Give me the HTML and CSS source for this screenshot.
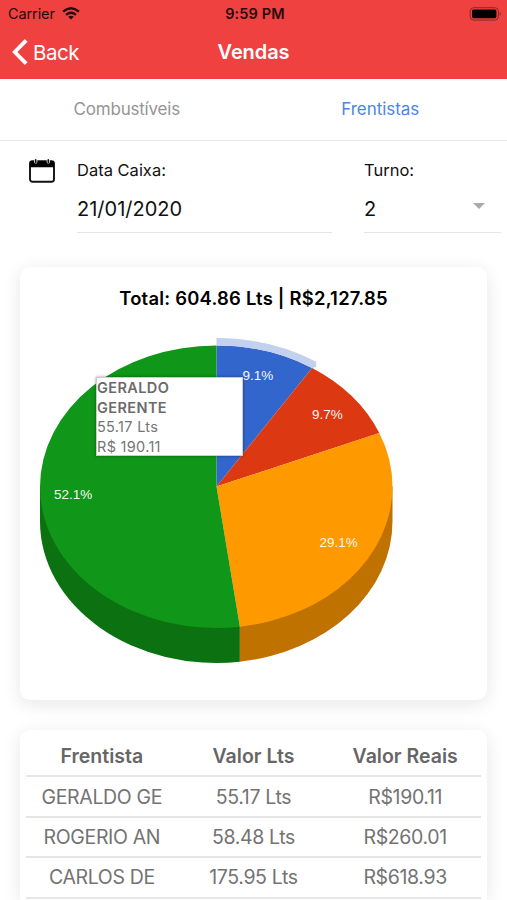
FILE: index.html
```html
<!DOCTYPE html>
<html lang="pt-BR">
<head>
<meta charset="utf-8">
<title>Vendas</title>
<link rel="stylesheet" href="styles.css">
</head>
<body>
<header class="header">
  <div class="status">
    <div class="carrier"><span>Carrier</span>
      <svg class="wifi" width="18" height="13" viewBox="0 0 18 13" fill="none" stroke="#260b0b" stroke-width="2.3"><path d="M1.1 4.6Q9-2.2 16.9 4.6M4 7.9q5-4.2 10 0"/><path d="M9 12.4 6.2 9.8q2.8-2.2 5.6 0z" fill="#260b0b" stroke="none"/></svg>
    </div>
    <span class="clock">9:59 PM</span>
    <svg class="battery" width="33" height="14" viewBox="0 0 33 14"><rect x="1.2" y=".7" width="28.2" height="12.4" rx="3.6" fill="none" stroke="#8d2525" stroke-width="1"/><rect x="3" y="2.4" width="24.4" height="8.8" rx="1.6" fill="#000"/><path d="M30.8 4.7q2 2.2 0 4.4z" fill="#8d2525"/></svg>
  </div>
  <nav class="nav">
    <a class="back"><svg width="16" height="26" viewBox="0 0 16 26" fill="none" stroke="#fff" stroke-width="3.8"><path d="M14.2 1.4 2.8 13l11.4 11.6"/></svg><span>Back</span></a>
    <h1 class="title">Vendas</h1>
    <span></span>
  </nav>
</header>
<div class="tabs"><a class="tab">Combustíveis</a><a class="tab active">Frentistas</a></div>
<main>
  <form class="filters">
    <svg class="calendar" width="26" height="24" viewBox="0 0 26 24"><rect x="1" y="2.3" width="24" height="20.4" rx="2.5" fill="#fff" stroke="#111" stroke-width="1.9"/><path d="M1 8.3V4.4q0-2.1 2.3-2.1h19.4Q25 2.3 25 4.4v3.9z" fill="#000"/><g fill="#fff"><rect x="5.1" y="0" width="3.2" height="4.5" rx="1.6"/><rect x="17.7" y="0" width="3.2" height="4.5" rx="1.6"/></g><path d="M6.7.9v2.5M19.3.9v2.5" stroke="#111" stroke-width="1.7" stroke-linecap="round"/></svg>
    <div class="field date"><label>Data Caixa:</label><div class="value">21/01/2020</div></div>
    <div class="field shift"><label>Turno:</label><div class="value"><span>2</span><i class="caret"></i></div></div>
  </form>
  <section class="card chart-card">
    <h2 class="total">Total: 604.86 Lts | R$2,127.85</h2>
    <div class="chart">
      <svg width="467" height="350" viewBox="20 330 467 350">
        <path d="M40 486.5v35A176.5 141.5 0 0 0 239.9 661.7v-35z" fill="#0c7211"/>
        <path d="M392.5 486.5v35A176.5 141.5 0 0 1 239.9 661.7v-35z" fill="#bf7200"/>
        <path d="M216.5 486.5V345.5A176.5 141.2 0 0 1 312.1 368z" fill="#36c"/>
        <path d="M216.5 486.5 312.1 368A176.5 141.2 0 0 1 379.3 433z" fill="#dc3912"/>
        <path d="M216.5 486.5 379.3 433A176 141.3 0 0 1 392.5 486.8 176.3 141.3 0 0 1 239.9 626.7z" fill="#f90"/>
        <path d="M216.5 486.5 239.9 626.7A176.5 141.2 0 0 1 40 486.7 176.5 141.2 0 0 1 216.5 345.5z" fill="#109618"/>
        <path d="M216.5 338A184 148.5 0 0 1 316.2 361.8V367L312.1 368A176.5 141 0 0 0 216.5 345.5z" fill="#c2d1f0"/>
        <g class="slice-label"><text x="242.5" y="380">9.1%</text><text x="312" y="419">9.7%</text><text x="319.5" y="547">29.1%</text><text x="54" y="499">52.1%</text></g>
      </svg>
      <div class="tooltip"><b>GERALDO GERENTE</b><span>55.17 Lts</span><span>R$ 190.11</span></div>
    </div>
  </section>
  <section class="card table-card">
    <table>
      <thead><tr><th>Frentista</th><th>Valor Lts</th><th>Valor Reais</th></tr></thead>
      <tbody>
        <tr><td>GERALDO GE</td><td>55.17 Lts</td><td>R$190.11</td></tr>
        <tr><td>ROGERIO AN</td><td>58.48 Lts</td><td>R$260.01</td></tr>
        <tr><td>CARLOS DE</td><td>175.95 Lts</td><td>R$618.93</td></tr>
      </tbody>
    </table>
  </section>
</main>
</body>
</html>
```
FILE: styles.css
```css
* { box-sizing: border-box; }
body { margin: 0; height: 900px; overflow: hidden; background: #fff; color: #111; font-family: Inter, "Liberation Sans", sans-serif; }
h1, h2 { margin: 0; }
.header { height: 79px; background: #f04141; display: flex; flex-direction: column; }
.status { height: 27px; display: grid; grid-template-columns: 1fr auto 1fr; align-items: center; padding: 0 5px 0 8px; color: #260b0b; font-size: 14.5px; letter-spacing: -.1px; }
.carrier { display: flex; align-items: center; gap: 7px; }
.clock { font-weight: 600; letter-spacing: .15px; }
.battery { justify-self: end; }
.nav { flex: 1; display: grid; grid-template-columns: 1fr auto 1fr; align-items: center; padding: 0 12px 2px; color: #fff; }
.back { display: flex; align-items: center; gap: 5px; font-size: 20.5px; letter-spacing: -.5px; }
.title { font-size: 20px; font-weight: 600; letter-spacing: -.1px; }
.tabs { height: 62px; display: grid; grid-template-columns: 1fr 1fr; align-items: center; border-bottom: 1px solid #e7e7e7; padding-bottom: 2px; }
.tab { text-align: center; font-size: 17px; color: #959595; letter-spacing: -.2px; }
.tab.active { color: #4a86ea; letter-spacing: -.05px; }
.filters { height: 126px; display: flex; padding: 17px 6px 0 29px; }
.calendar { flex: none; margin: 1px 22px 0 0; }
.field { height: 75px; border-bottom: 1px solid #e4e4e4; }
.date { width: 255px; }
.shift { width: 137px; margin-left: 32px; }
.field label { display: block; font-size: 16.5px; line-height: 24px; }
.value { display: flex; justify-content: space-between; align-items: center; font-size: 20px; line-height: 24px; margin-top: 15px; }
.caret { border: 6px solid transparent; border-top-color: #aaa; border-bottom: 0; margin: -6px 16px 0 0; }
.card { margin: 0 20px; background: #fff; border-radius: 10px; box-shadow: 0 4px 18px rgba(0, 0, 0, .1); }
.chart-card { height: 433px; }
.total { height: 63px; padding-top: 19px; text-align: center; font-size: 18.4px; line-height: 24px; font-weight: 600; letter-spacing: .23px; color: #000; }
.chart { position: relative; height: 350px; }
.chart svg { display: block; }
.slice-label { font: 13.5px "Liberation Sans", sans-serif; fill: #f6f6f6; }
.tooltip { position: absolute; left: 76px; top: 47px; width: 147px; height: 79px; background: #fff; border: 1px solid #ccc; box-shadow: 0 0 3px rgba(0, 0, 0, .4); color: #757575; font-size: 14.5px; line-height: 19.5px; letter-spacing: .3px; display: flex; flex-direction: column; }
.tooltip b { width: 90px; font-weight: 600; letter-spacing: .4px; color: #6b6b6b; }
.table-card { margin-top: 30px; height: 170px; padding: 6px 6px 0; border-radius: 10px 10px 0 0; }
table { width: 100%; border-collapse: collapse; table-layout: fixed; color: #737373; }
th, td { height: 40.4px; padding: 0; text-align: center; font-size: 19.5px; line-height: 24px; border-bottom: 2px solid #e6e6e6; }
th { padding-top: 1px; font-weight: 600; color: #666; }
td { letter-spacing: -.35px; }
```
